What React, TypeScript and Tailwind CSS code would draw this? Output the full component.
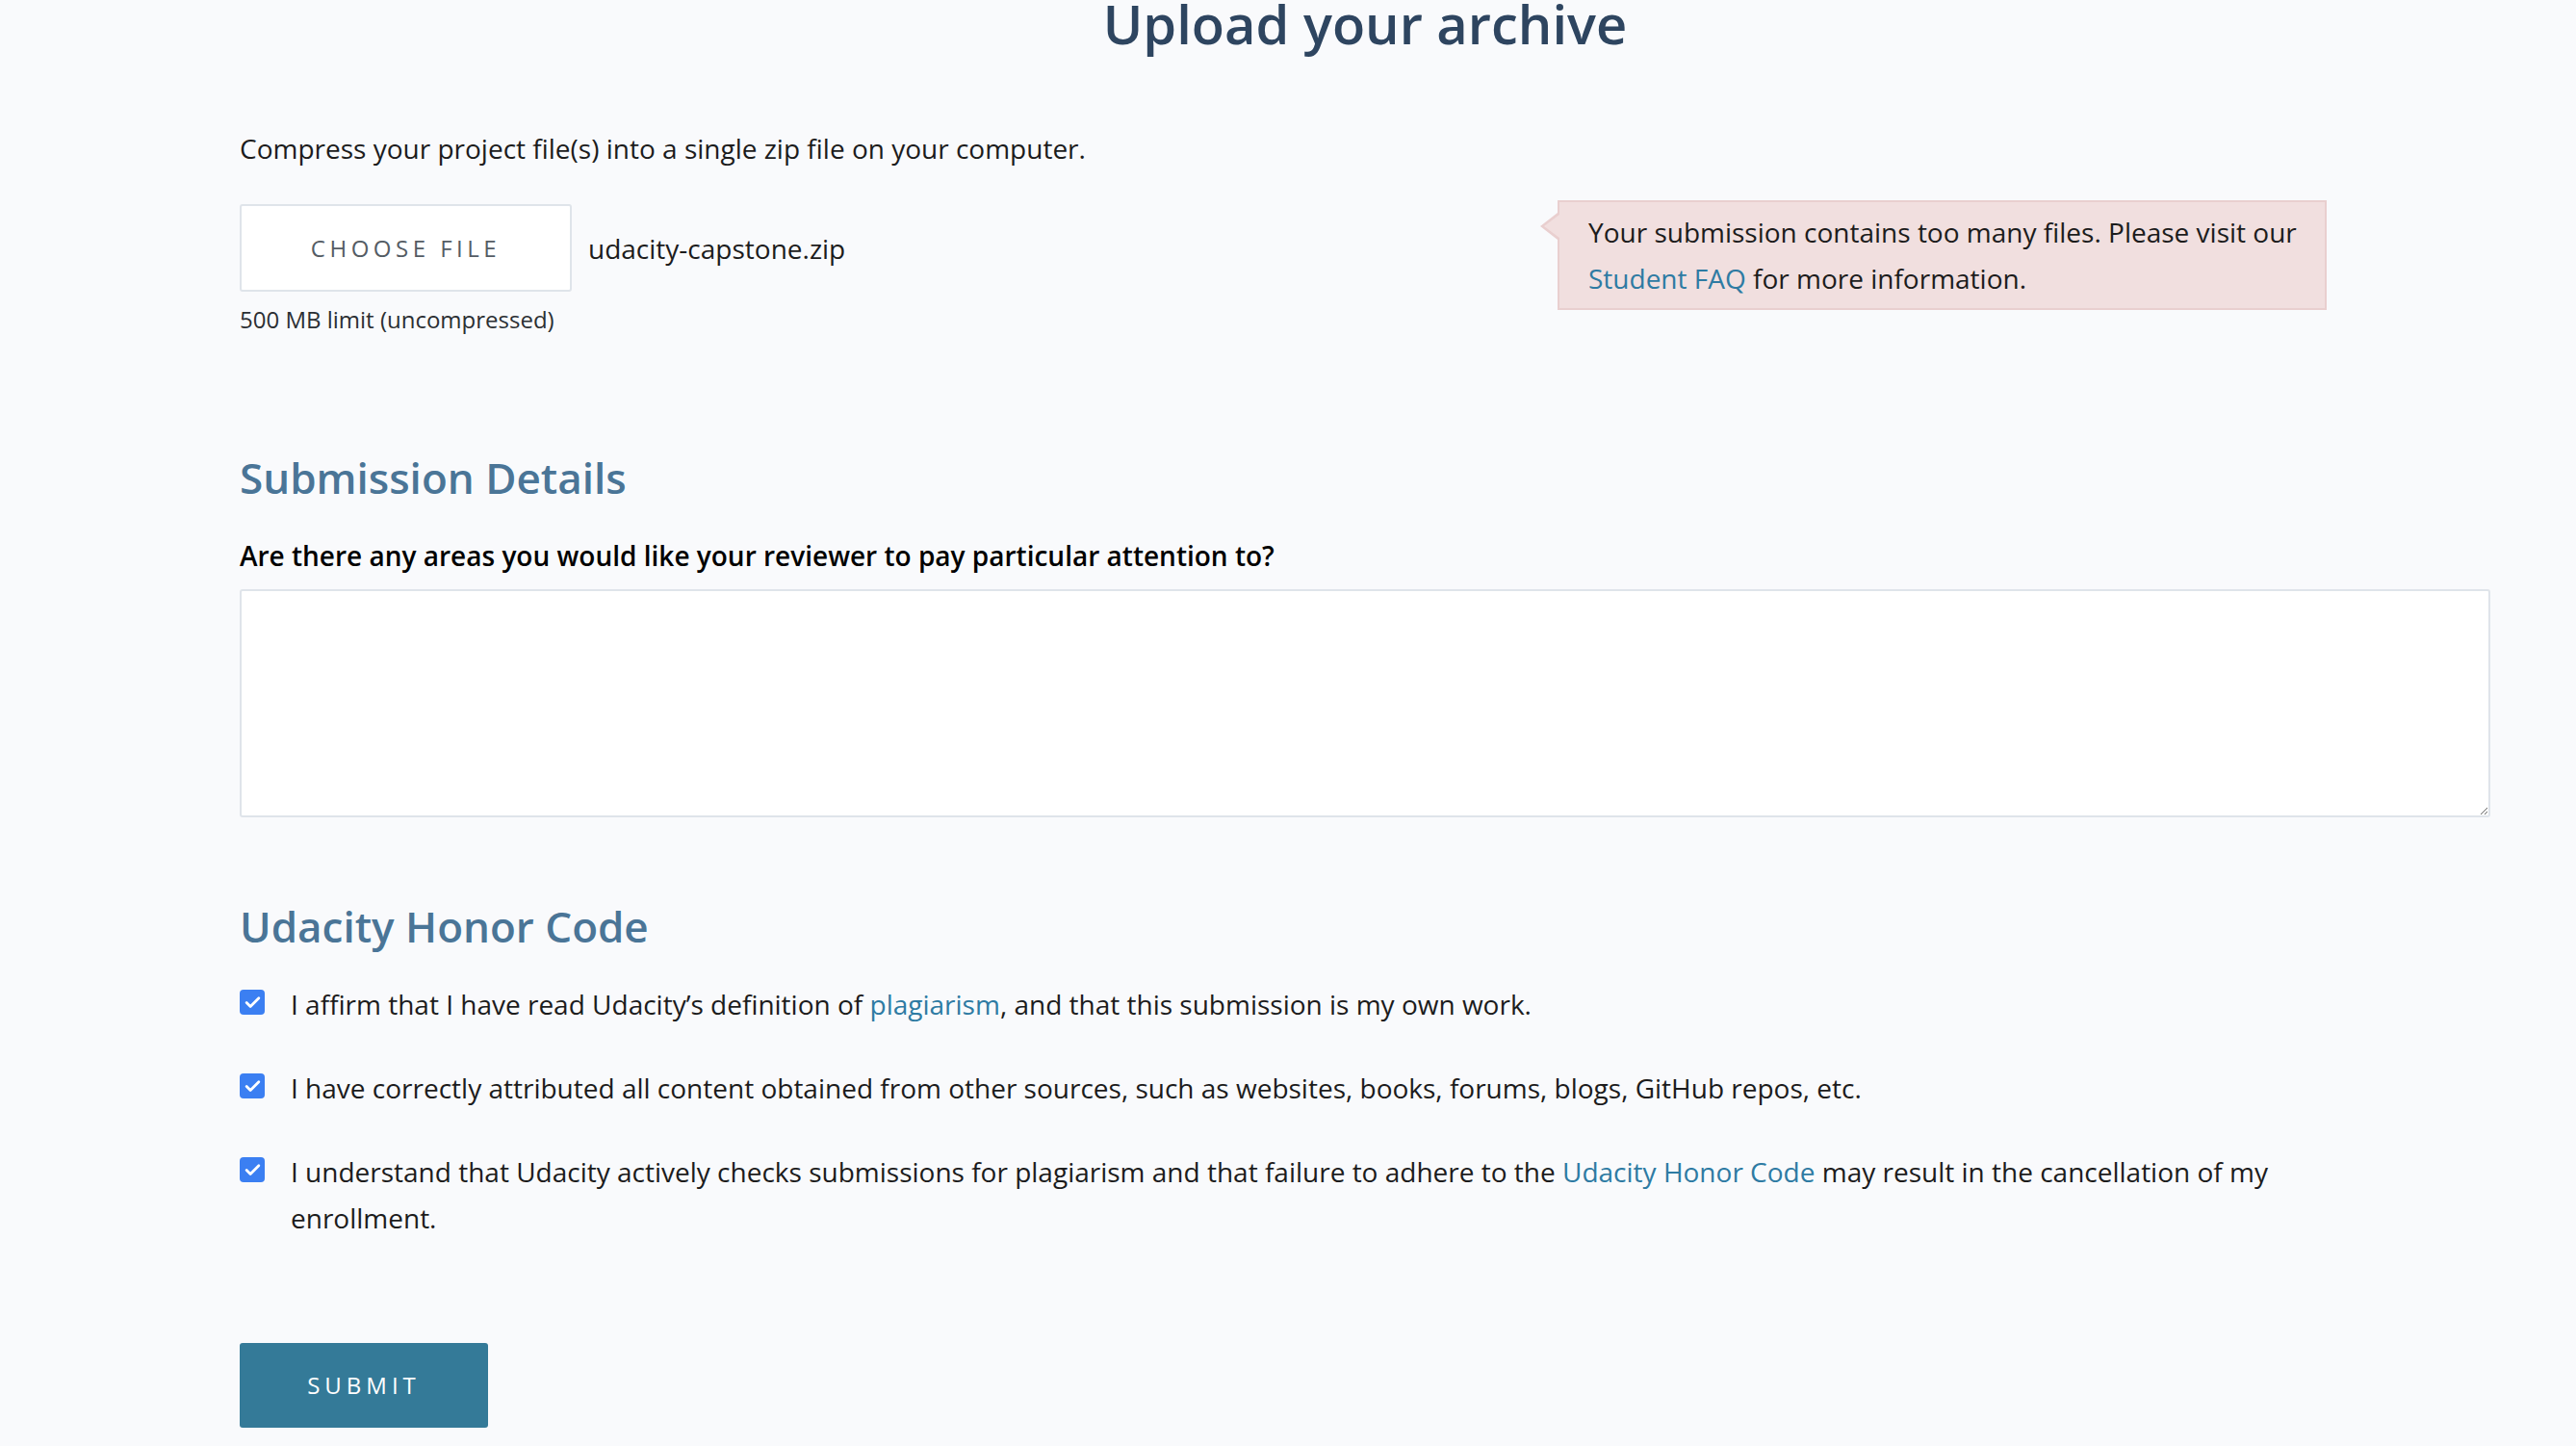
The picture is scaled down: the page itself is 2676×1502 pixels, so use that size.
import { Check } from "lucide-react";

const honorItems = [
  {
    id: 1,
    before: "I affirm that I have read Udacity’s definition of ",
    link: "plagiarism",
    after: ", and that this submission is my own work.",
  },
  {
    id: 2,
    before: "I have correctly attributed all content obtained from other sources, such as websites, books, forums, blogs, GitHub repos, etc.",
    link: "",
    after: "",
  },
  {
    id: 3,
    before: "I understand that Udacity actively checks submissions for plagiarism and that failure to adhere to the ",
    link: "Udacity Honor Code",
    after: " may result in the cancellation of my enrollment.",
  },
];

const CheckBox = () => (
  <span className="mt-[9px] flex h-[26px] w-[26px] shrink-0 items-center justify-center rounded-[4px] bg-[#3b7ff2]">
    <Check size={19} strokeWidth={3.5} color="#ffffff" />
  </span>
);

const App = () => {
  return (
    <div className="min-h-[1502px] w-full overflow-hidden bg-[#f9fafc] pl-[249px] pr-[89px] font-['Open_Sans',sans-serif] text-[28px] text-[#1c1c1c]">
      {/* Title */}
      <h1 className="-mt-[4px] text-center text-[56px] font-semibold leading-none text-[#2e4560]">
        Upload your archive
      </h1>

      <p className="mt-[79px] leading-[46px]">Compress your project file(s) into a single zip file on your computer.</p>

      {/* Upload row */}
      <div className="mt-[35px] flex items-start">
        <div className="flex-1">
          <div className="flex items-center">
            <button className="h-[91px] w-[345px] rounded-[3px] border-2 border-[#dfe4ea] bg-white text-[24px] tracking-[4.5px] text-[#545c64]">
              CHOOSE FILE
            </button>
            <span className="ml-[17px]">udacity-capstone.zip</span>
          </div>
          <p className="mt-[14px] text-[24px] leading-[30px] text-[#2b2f33]">500 MB limit (uncompressed)</p>
        </div>

        {/* Alert */}
        <div className="relative mr-[170px] -mt-[4px] w-[799px] border-2 border-[#e9cfcf] bg-[#f1dfdf] py-[7px] pl-[30px] pr-[20px] leading-[48px]">
          <span className="absolute -left-[20px] top-[11px] h-0 w-0 border-y-[14px] border-r-[18px] border-y-transparent border-r-[#e9cfcf]" />
          <span className="absolute -left-[16px] top-[13px] h-0 w-0 border-y-[12px] border-r-[16px] border-y-transparent border-r-[#f1dfdf]" />
          Your submission contains too many files. Please visit our{" "}
          <a className="text-[#2e7ba3]">Student FAQ</a> for more information.
        </div>
      </div>

      {/* Submission details */}
      <h2 className="mt-[119px] text-[44px] font-semibold leading-[60px] text-[#4a7597]">Submission Details</h2>
      <p className="mt-[33px] font-semibold leading-[36px] text-black">
        Are there any areas you would like your reviewer to pay particular attention to?
      </p>
      <textarea
        readOnly
        className="mt-[17px] block h-[237px] w-full rounded-[3px] border-2 border-[#dfe4ea] bg-white"
      />

      {/* Honor code */}
      <h2 className="mt-[83px] text-[44px] font-semibold leading-[60px] text-[#4a7597]">Udacity Honor Code</h2>
      <ul className="mt-[27px] flex max-w-[2160px] flex-col gap-[39px]">
        {honorItems.map((item) => (
          <li key={item.id} className="flex gap-[27px] leading-[48px]">
            <CheckBox />
            <span>
              {item.before}
              {item.link && <a className="text-[#2e7ba3]">{item.link}</a>}
              {item.after}
            </span>
          </li>
        ))}
      </ul>

      <button className="mt-[106px] h-[88px] w-[258px] rounded-[3px] bg-[#347a98] text-[24px] tracking-[5px] text-white">
        SUBMIT
      </button>
    </div>
  );
};

export default App;
